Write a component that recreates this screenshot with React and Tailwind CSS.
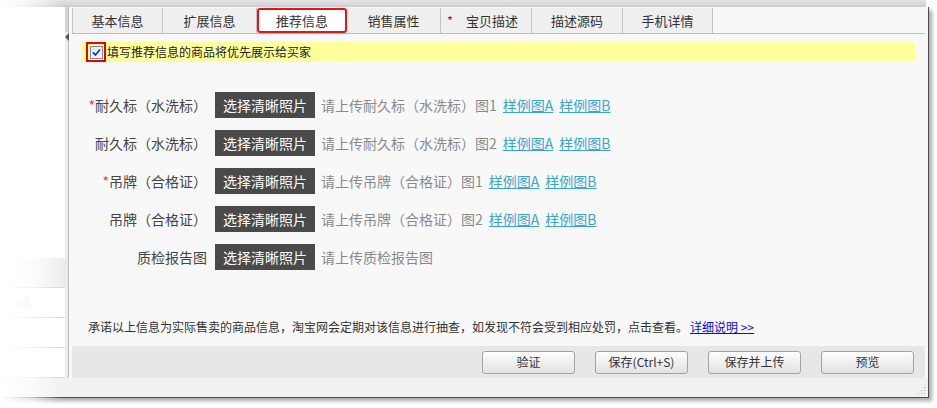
import React from "react";

const tabs = [
  { label: "基本信息", w: "w-[91px]" },
  { label: "扩展信息", w: "w-[94px]" },
  { label: "推荐信息", w: "w-[90px]", active: true },
  { label: "销售属性", w: "w-[94px]" },
  { label: "宝贝描述", w: "w-[91px]", req: true },
  { label: "描述源码", w: "w-[91px]" },
  { label: "手机详情", w: "w-[90px]" },
];

const rows = [
  { req: true, label: "耐久标（水洗标）", hint: "请上传耐久标（水洗标）图1", samples: true },
  { label: "耐久标（水洗标）", hint: "请上传耐久标（水洗标）图2", samples: true },
  { req: true, label: "吊牌（合格证）", hint: "请上传吊牌（合格证）图1", samples: true },
  { label: "吊牌（合格证）", hint: "请上传吊牌（合格证）图2", samples: true },
  { label: "质检报告图", hint: "请上传质检报告图" },
];

const font = { fontFamily: '"Microsoft YaHei", "Noto Sans CJK SC", sans-serif' };

const Btn = ({ children }) => (
  <button className="w-[93px] h-[23px] rounded-[3px] border border-[#a3a3a3] bg-gradient-to-b from-[#fdfdfd] to-[#e2e2e2] text-[12px] text-[#333] leading-none">
    {children}
  </button>
);

export default function App() {
  return (
    <div className="w-[937px] h-[408px] bg-white relative overflow-hidden" style={font}>
      {/* top shadow band */}
      <div className="w-[926px] h-[7px] bg-gradient-to-b from-[#e4e4e4] to-[#cfcfcf]" />

      {/* window */}
      <div className="w-[929px] h-[391px] flex flex-col border-r border-b border-[#4d4d4d] shadow-[3px_3px_4px_rgba(0,0,0,0.35)] bg-[#f4f4f4]">
        <div className="flex h-[371px]">
          {/* sidebar */}
          <div className="w-[65px] flex flex-col bg-white">
            <div className="h-[251px]" />
            <div className="h-[30px] bg-gradient-to-r from-white to-[#ececec] border-b border-[#d6d6d6]" />
            <div className="h-[30px] border-b border-[#d6d6d6] flex items-center pl-[17px] text-[11px] text-[#c8c8c8]">(0)</div>
            <div className="h-[30px] border-b border-[#d6d6d6]" />
            <div className="h-[30px] border-b border-[#d6d6d6]" />
          </div>
          {/* splitter */}
          <div className="w-[4px] relative bg-[#ececec] border-r border-[#bcbcbc]">
            <div className="h-[25px] bg-[#d2d2d2]" />
            <span className="absolute left-0 top-[26px] w-0 h-0 border-y-[4px] border-y-transparent border-r-[4px] border-r-[#555]" />
          </div>

          {/* main */}
          <div className="flex-1 flex flex-col bg-[#f8f8f8] pl-[3px] pr-[3px]">
            <div className="mt-[1px] flex h-[26px] border-b border-[#bdbdbd]">
              {tabs.map((t, i) =>
                t.active ? (
                  <div
                    key={t.label}
                    className={`${t.w} h-[25px] flex items-center justify-center bg-white border-2 border-[#ee1111] rounded-[3px] text-[13px] text-[#333]`}
                  >
                    {t.label}
                  </div>
                ) : t.req ? (
                  <div
                    key={t.label}
                    className={`${t.w} h-[25px] flex items-center bg-[#efefef] border-r border-[#c3c3c3] text-[13px] text-[#333] pl-[6px]`}
                  >
                    <span className="text-[#ee0000] w-[19px]">*</span>
                    {t.label}
                  </div>
                ) : (
                  <div
                    key={t.label}
                    className={`${t.w} h-[25px] flex items-center justify-center bg-[#efefef] border-r border-[#c3c3c3] text-[13px] text-[#333] ${i === 0 ? "border-l" : ""}`}
                  >
                    {t.label}
                  </div>
                )
              )}
            </div>

            <div className="mt-[8px] ml-[9px] mr-[10px] h-[20px] bg-[#ffff9c] flex items-center pl-[5px]">
              <div className="w-[20px] h-[20px] border-2 border-[#ee0000] flex items-center justify-center">
                <div className="w-[13px] h-[13px] border border-[#7b8a9c] bg-gradient-to-br from-[#dfe4ea] to-[#f6f7f9] flex items-center justify-center">
                  <svg width="9" height="9" viewBox="0 0 9 9">
                    <path d="M1 4.5 L3.5 7 L8 1.5" fill="none" stroke="#2a3a9a" strokeWidth="1.8" />
                  </svg>
                </div>
              </div>
              <span className="ml-[1px] text-[12px] text-[#222]">填写推荐信息的商品将优先展示给买家</span>
            </div>

            <div className="mt-[24px] flex flex-col">
              {rows.map((r, i) => (
                <div key={i} className="h-[38px] flex items-center">
                  <div className="w-[135px] text-right text-[14px] text-[#444]">
                    {r.req && <span className="text-[#ff3333]">*</span>}
                    {r.label}
                  </div>
                  <div className="ml-[8px] w-[100px] h-[26px] bg-[#4a4a4a] text-white text-[14px] flex items-center justify-center">
                    选择清晰照片
                  </div>
                  <span className="ml-[6px] text-[14px] text-[#8a8a8a]">{r.hint}</span>
                  {r.samples && (
                    <>
                      <a className="ml-[6px] text-[14px] text-[#3aa6cf] underline">样例图A</a>
                      <a className="ml-[6px] text-[14px] text-[#3aa6cf] underline">样例图B</a>
                    </>
                  )}
                </div>
              ))}
            </div>

            <div className="mt-auto mb-[11px] ml-[16px] text-[12px] leading-[16px] text-[#333]">
              承诺以上信息为实际售卖的商品信息，淘宝网会定期对该信息进行抽查，如发现不符会受到相应处罚，点击查看。
              <a className="ml-[2px] text-[#0a0aee] underline">详细说明 &gt;&gt;</a>
            </div>

            <div className="h-[32px] bg-[#e7e7e7] flex items-center justify-end gap-[20px] pr-[11px]">
              <Btn>验证</Btn>
              <Btn>保存(Ctrl+S)</Btn>
              <Btn>保存并上传</Btn>
              <Btn>预览</Btn>
            </div>
          </div>
        </div>

        {/* status bar */}
        <div className="h-[19px] bg-[#f1f1f1] relative">
          <svg className="absolute right-[2px] bottom-[2px]" width="8" height="8" viewBox="0 0 8 8">
            <rect x="6" y="0" width="1" height="1" fill="#aaa" />
            <rect x="3" y="3" width="1" height="1" fill="#aaa" />
            <rect x="6" y="3" width="1" height="1" fill="#aaa" />
            <rect x="0" y="6" width="1" height="1" fill="#aaa" />
            <rect x="3" y="6" width="1" height="1" fill="#aaa" />
            <rect x="6" y="6" width="1" height="1" fill="#aaa" />
          </svg>
        </div>
      </div>

      {/* left fade */}
      <div className="absolute left-0 top-0 w-[62px] h-full bg-gradient-to-r from-white via-white/70 to-transparent pointer-events-none" />
    </div>
  );
}
